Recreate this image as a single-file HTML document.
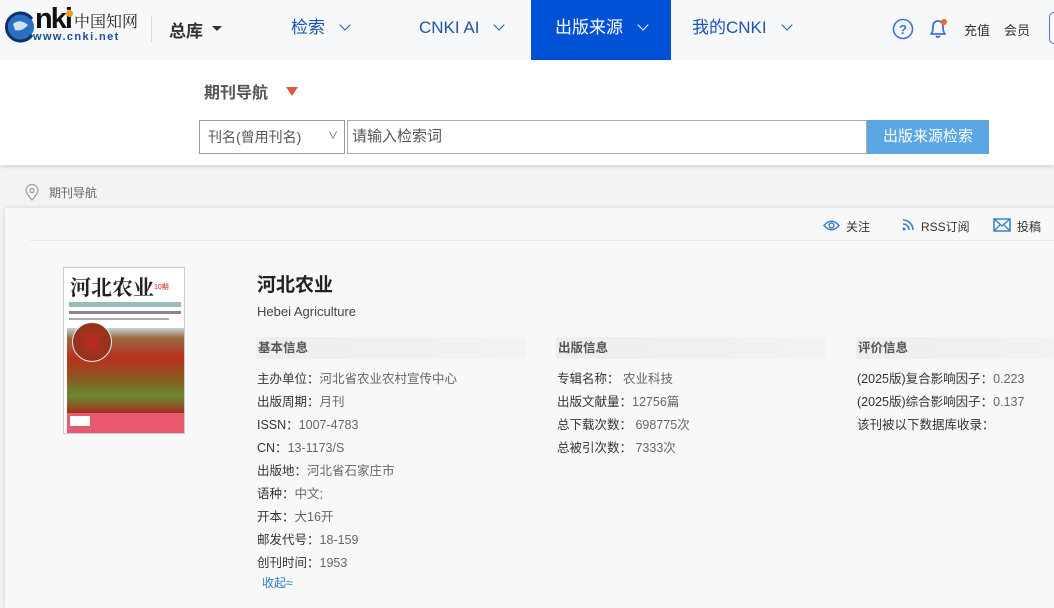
<!DOCTYPE html>
<html><head><meta charset="utf-8"><style>
*{margin:0;padding:0;box-sizing:border-box}
body{width:1054px;height:594px;overflow:hidden;background:#f3f3f3;font-family:"Liberation Sans","Noto Sans CJK SC",sans-serif;position:relative;color:#333}
.hdr{position:absolute;left:0;top:0;width:1054px;height:60px;background:#f7f8fa}
.abs{position:absolute;white-space:nowrap}
.nav{font-size:17px;color:#1d52b5;top:0;height:56px;line-height:56px}
.chev{display:inline-block;width:8px;height:8px;border-right:1.6px solid currentColor;border-bottom:1.6px solid currentColor;transform:rotate(45deg);margin-left:16px;vertical-align:middle;position:relative;top:-4px}
.srch{position:absolute;left:0;top:60px;width:1054px;height:105px;background:#fff;box-shadow:0 2px 4px rgba(0,0,0,.12)}
.panel{position:absolute;left:5px;top:208px;width:1060px;height:400px;background:#f8f8f8;box-shadow:0 0 4px rgba(0,0,0,.15)}
.sec{position:absolute;height:22px;width:270px;background:linear-gradient(90deg,#eeeeee,#f2f2f2);font-size:12.5px;font-weight:bold;color:#555;padding-left:2px;line-height:22px}
.ln{position:absolute;font-size:12.5px;color:#333;white-space:nowrap}
.ln span{color:#666}
</style></head><body>
<div class="hdr">
 <svg class="abs" style="left:5px;top:11px" width="32" height="32" viewBox="0 0 32 32"><circle cx="16" cy="16" r="13" fill="#2a6fc0"/><path d="M27 8 A14 14 0 1 0 27 24" fill="none" stroke="#0d2f6a" stroke-width="3"/><path d="M8 13 Q15 7 23 14 Q17 21 10 19Z" fill="#cfe3f7"/></svg>
 <div class="abs" style="left:35px;top:3px;font-size:29px;font-weight:bold;color:#111;letter-spacing:-2px">nki</div>
 <div class="abs" style="left:66px;top:10px;width:7px;height:7px;border-radius:50%;background:#f29b1f"></div>
 <div class="abs" style="left:74px;top:9px;font-size:16px;color:#222;font-family:'Noto Serif CJK SC',serif">中国知网</div>
 <div class="abs" style="left:33px;top:31px;font-size:11px;font-weight:bold;color:#1b4e96;letter-spacing:1.4px">www.cnki.net</div>
 <div class="abs" style="left:151px;top:16px;width:1px;height:26px;background:#d6dbe3"></div>
 <div class="abs" style="left:169px;top:17px;font-size:17px;font-weight:bold;color:#333">总库</div>
 <div class="abs" style="left:212px;top:26px;border-left:5px solid transparent;border-right:5px solid transparent;border-top:5px solid #333"></div>
 <div class="abs nav" style="left:291px">检索<i class="chev"></i></div>
 <div class="abs nav" style="left:419px">CNKI AI<i class="chev"></i></div>
 <div class="abs" style="left:531px;top:0;width:140px;height:60px;background:#0051d6"></div>
 <div class="abs nav" style="left:555px;color:#fff">出版来源<i class="chev"></i></div>
 <div class="abs nav" style="left:692px">我的CNKI<i class="chev"></i></div>
 <svg class="abs" style="left:892px;top:18px" width="22" height="22" viewBox="0 0 22 22"><circle cx="11" cy="11" r="9.5" fill="none" stroke="#3b73d8" stroke-width="1.6"/><text x="11" y="16" font-size="13" font-weight="bold" text-anchor="middle" fill="#3b73d8" font-family="Liberation Sans">?</text></svg>
 <svg class="abs" style="left:926px;top:16px" width="24" height="24" viewBox="0 0 24 24"><path d="M5 18 Q7 16 7 11 Q7 5 12 5 Q17 5 17 11 Q17 16 19 18Z" fill="none" stroke="#3b73d8" stroke-width="1.8" stroke-linejoin="round"/><path d="M10 20 Q12 22 14 20" fill="none" stroke="#3b73d8" stroke-width="1.8"/><circle cx="18" cy="6" r="3" fill="#f06a1d"/></svg>
 <div class="abs" style="left:964px;top:20px;font-size:13px;color:#333">充值</div>
 <div class="abs" style="left:1004px;top:20px;font-size:13px;color:#333">会员</div>
 <div class="abs" style="left:1049px;top:12px;width:20px;height:32px;border:1.5px solid #3b73d8;border-radius:5px"></div>
</div>
<div class="srch">
 <div class="abs" style="left:204px;top:19px;font-size:16px;font-weight:bold;color:#555">期刊导航</div>
 <div class="abs" style="left:286px;top:27px;border-left:6px solid transparent;border-right:6px solid transparent;border-top:9px solid #e8553f"></div>
 <div class="abs" style="left:199px;top:60px;width:146px;height:34px;border:1px solid #999;background:#fff;font-size:14px;color:#555;line-height:32px;padding-left:8px">刊名(曾用刊名)<span style="position:absolute;right:6px;top:0;font-size:10px">&#8744;</span></div>
 <div class="abs" style="left:347px;top:60px;width:520px;height:34px;border:1px solid #aaa;background:#fff;font-size:15px;color:#555;line-height:32px;padding-left:4px">请输入检索词</div>
 <div class="abs" style="left:867px;top:60px;width:122px;height:34px;background:#5ba7e6;color:#fff;font-size:15px;line-height:34px;text-align:center">出版来源检索</div>
</div>
<svg class="abs" style="left:25px;top:184px" width="14" height="17" viewBox="0 0 14 17"><path d="M7 16 Q1 9 1 6.5 A6 6 0 0 1 13 6.5 Q13 9 7 16Z" fill="none" stroke="#999" stroke-width="1.2"/><circle cx="7" cy="6.5" r="2" fill="none" stroke="#999" stroke-width="1.2"/></svg>
<div class="abs" style="left:49px;top:184px;font-size:12px;color:#666">期刊导航</div>
<div class="panel">
 <div class="abs" style="left:25px;top:32px;width:1030px;height:1px;background:#e8e8e8"></div>
 <svg class="abs" style="left:818px;top:10px" width="17" height="15" viewBox="0 0 17 15"><path d="M1 7.5 Q8.5 -1 16 7.5 Q8.5 16 1 7.5Z" fill="none" stroke="#3a7fc8" stroke-width="1.4"/><circle cx="8.5" cy="7.5" r="2.4" fill="none" stroke="#3a7fc8" stroke-width="1.4"/></svg>
 <div class="abs" style="left:841px;top:10px;font-size:12px;color:#333">关注</div>
 <svg class="abs" style="left:897px;top:11px" width="12" height="12" viewBox="0 0 12 12"><circle cx="2" cy="10" r="1.5" fill="#3a7fc8"/><path d="M1 5 A6 6 0 0 1 7 11 M1 1 A10 10 0 0 1 11 11" fill="none" stroke="#3a7fc8" stroke-width="1.6"/></svg>
 <div class="abs" style="left:916px;top:10px;font-size:12px;color:#333">RSS订阅</div>
 <svg class="abs" style="left:988px;top:10px" width="18" height="14" viewBox="0 0 18 14"><rect x="1" y="1" width="16" height="12" fill="none" stroke="#3a7fc8" stroke-width="1.5"/><path d="M1 1 L9 8 L17 1 M1 13 L7 7 M17 13 L11 7" fill="none" stroke="#3a7fc8" stroke-width="1.4"/></svg>
 <div class="abs" style="left:1012px;top:10px;font-size:12px;color:#333">投稿</div>
 <div class="abs" style="left:58px;top:59px;width:122px;height:167px;border:1px solid #ccc;background:#fff;overflow:hidden">
  <div style="position:absolute;left:6px;top:4px;font-size:21px;font-weight:bold;color:#222;font-family:'Noto Serif CJK SC',serif">河北农业</div>
  <div style="position:absolute;left:90px;top:14px;font-size:7px;color:#c22">10期</div>
  <div style="position:absolute;left:5px;top:34px;width:112px;height:5px;background:#9bb"></div>
  <div style="position:absolute;left:5px;top:43px;width:112px;height:3px;background:#888"></div>
  <div style="position:absolute;left:5px;top:50px;width:100px;height:2px;background:#aaa"></div>
  <div style="position:absolute;left:3px;top:60px;width:117px;height:85px;background:linear-gradient(180deg,#c5d3d8 0%,#9a6a40 12%,#b83020 35%,#8a5a20 60%,#6a8a30 80%,#a03020 100%)"></div>
  <div style="position:absolute;left:8px;top:54px;width:40px;height:40px;border-radius:50%;background:radial-gradient(#c02a20,#7a3a1a);border:1px solid #eee"></div>
  <div style="position:absolute;left:3px;top:145px;width:117px;height:20px;background:#e95a6f"></div>
  <div style="position:absolute;left:6px;top:148px;width:20px;height:10px;background:#fff"></div>
 </div>
 <div class="abs" style="left:252px;top:62px;font-size:19px;font-weight:bold;color:#222">河北农业</div>
 <div class="abs" style="left:252px;top:96px;font-size:13px;color:#444">Hebei Agriculture</div>
 <div class="sec" style="left:251px;top:129px">基本信息</div>
 <div class="sec" style="left:551px;top:129px">出版信息</div>
 <div class="sec" style="left:851px;top:129px;width:220px">评价信息</div>
 <div class="ln" style="left:252px;top:160px">主办单位：<span>河北省农业农村宣传中心</span></div>
 <div class="ln" style="left:252px;top:183px">出版周期：<span>月刊</span></div>
 <div class="ln" style="left:252px;top:206px">ISSN：<span>1007-4783</span></div>
 <div class="ln" style="left:252px;top:229px">CN：<span>13-1173/S</span></div>
 <div class="ln" style="left:252px;top:252px">出版地：<span>河北省石家庄市</span></div>
 <div class="ln" style="left:252px;top:275px">语种：<span>中文;</span></div>
 <div class="ln" style="left:252px;top:298px">开本：<span>大16开</span></div>
 <div class="ln" style="left:252px;top:321px">邮发代号：<span>18-159</span></div>
 <div class="ln" style="left:252px;top:344px">创刊时间：<span>1953</span></div>
 <div class="ln" style="left:257px;top:366px;color:#2f7bc8;font-size:12px">收起≈</div>
 <div class="ln" style="left:552px;top:160px">专辑名称： <span>农业科技</span></div>
 <div class="ln" style="left:552px;top:183px">出版文献量：<span>12756篇</span></div>
 <div class="ln" style="left:552px;top:206px">总下载次数： <span>698775次</span></div>
 <div class="ln" style="left:552px;top:229px">总被引次数： <span>7333次</span></div>
 <div class="ln" style="left:852px;top:160px">(2025版)复合影响因子：<span>0.223</span></div>
 <div class="ln" style="left:852px;top:183px">(2025版)综合影响因子：<span>0.137</span></div>
 <div class="ln" style="left:852px;top:206px">该刊被以下数据库收录：</div>
</div>
</body></html>
